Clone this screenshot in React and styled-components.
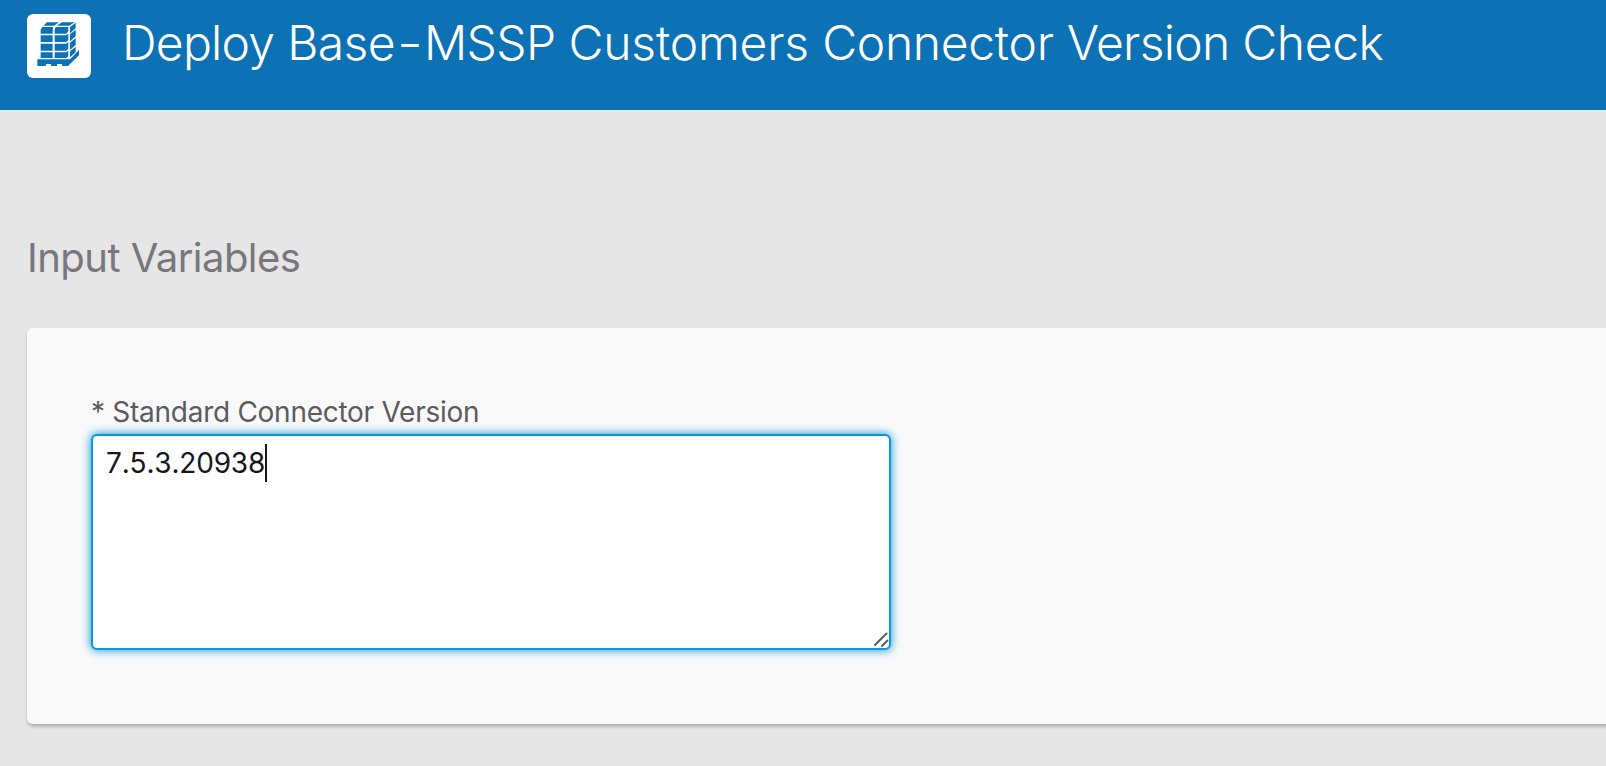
import React from "react";
import styled, { createGlobalStyle } from "styled-components";

const GlobalStyle = createGlobalStyle`
  * { box-sizing: border-box; }
  body {
    margin: 0;
    background: #e6e6e6;
    font-family: Inter, "Liberation Sans", sans-serif;
    overflow: hidden;
  }
`;

const Page = styled.div`
  height: 100vh;
  overflow: hidden;
`;

const Header = styled.header`
  display: flex;
  align-items: flex-start;
  height: 110px;
  padding: 14px 0 0 27px;
  background: #0d72b5;
`;

const Logo = styled.div`
  flex: none;
  width: 64px;
  height: 64px;
  border-radius: 6px;
  background: #fff;
`;

const Title = styled.h1`
  margin: 0 0 0 31px;
  font-size: 48px;
  line-height: 58px;
  font-weight: 300;
  color: #fff;
  white-space: nowrap;
`;

const Word = styled.span`
  letter-spacing: ${(p) => p.$track}px;
`;

const Hyphen = styled.span`
  display: inline-block;
  margin: 0 4px;
  transform: scaleX(1.2);
`;

const Main = styled.main`
  padding: 124px 0 0 27px;
`;

const SectionTitle = styled.h2`
  margin: 0;
  font-size: 40px;
  line-height: 48px;
  font-weight: 400;
  letter-spacing: -0.53px;
  color: #77777d;
`;

const Card = styled.section`
  margin-top: 46px;
  height: 396px;
  margin-right: -20px;
  padding: 67px 64px 0;
  border-radius: 6px;
  background: #f9f9f9;
  box-shadow: 0 3px 4px -1px rgba(0, 0, 0, 0.3);
`;

const Label = styled.label`
  display: block;
  font-size: 28px;
  line-height: 34px;
  letter-spacing: -0.27px;
  color: #5b5b60;
`;

const Field = styled.div`
  position: relative;
  width: 800px;
  height: 216px;
  margin-top: 5px;
  padding: 8px 13px;
  border: 2px solid #0b98d8;
  border-radius: 6px;
  background: #fff;
  box-shadow: 0 0 8px 1px rgba(11, 152, 216, 0.85);
  display: flex;
  align-items: flex-start;
`;

const Value = styled.span`
  padding-top: 2px;
  font-size: 28px;
  line-height: 34px;
  letter-spacing: -0.18px;
  font-kerning: none;
  font-feature-settings: "calt" 0;
  color: #17171a;
`;

const Caret = styled.span`
  width: 2px;
  height: 38px;
  background: #17171a;
`;

const Grip = styled.svg`
  position: absolute;
  right: 0;
  bottom: 0;
  width: 17px;
  height: 17px;
`;

const rows = [
  [64, 84],
  [89, 110],
  [115, 132],
];

const Pallet = () => (
  <svg width="64" height="64" viewBox="0 0 192 192" fill="#0d72b5">
    <path d="M60 25H96L81 35H49ZM105 25H143L127 35H89Z" />
    <path d="M46 39H78L77 59H41V47ZM86 39H124V52L118 59H83V47ZM129 39L146 26V43L129 58Z" />
    {rows.map(([top, bottom]) => (
      <path
        key={top}
        d={`M41 ${top}H77V${bottom}H41ZM83 ${top}H117L124 ${top - 5}V${bottom - 6}L118 ${bottom}H83ZM129 ${top - 3}L146 ${top - 17}V${bottom - 17}L129 ${bottom - 2}Z`}
      />
    ))}
    <path d="M31 136H129L156 108V124L123 156H105V150H90V156H72V150H57V156H31Z" />
  </svg>
);

export default function App() {
  return (
    <Page>
      <GlobalStyle />
      <Header>
        <Logo>
          <Pallet />
        </Logo>
        <Title>
          <Word $track={-0.72}>Deploy </Word>
          <Word $track={-0.6}>
            Base<Hyphen>-</Hyphen>MSSP{" "}
          </Word>
          <Word $track={-0.2}>Customers </Word>
          <Word $track={-0.3}>Connector </Word>
          <Word $track={-0.7}>Version </Word>
          <Word $track={-0.4}>Check</Word>
        </Title>
      </Header>
      <Main>
        <SectionTitle>Input Variables</SectionTitle>
        <Card>
          <Label>* Standard Connector Version</Label>
          <Field>
            <Value>7.5.3.20938</Value>
            <Caret />
            <Grip viewBox="0 0 17 17" stroke="#5a5a5a" strokeWidth="2">
              <path d="M2.5 14.5L15 2M9.5 15.5L16 9" />
            </Grip>
          </Field>
        </Card>
      </Main>
    </Page>
  );
}
